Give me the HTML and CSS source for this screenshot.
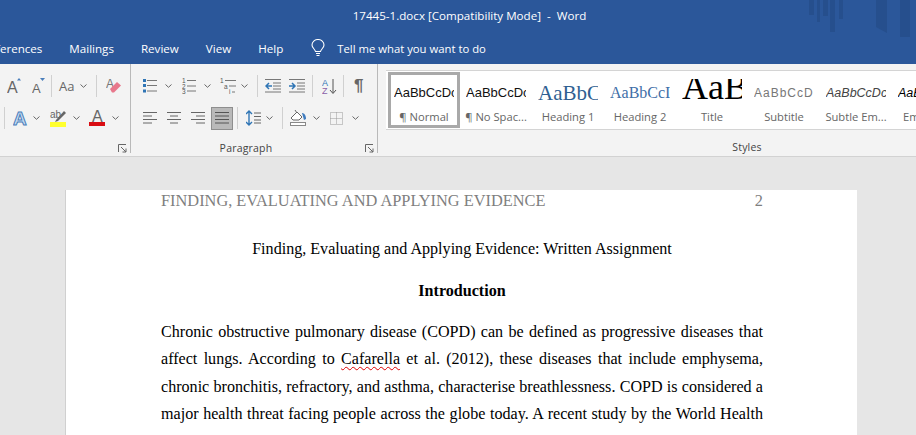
FILE: index.html
```html
<!DOCTYPE html>
<html lang="en">
<head>
<meta charset="utf-8">
<title>17445-1.docx [Compatibility Mode] - Word</title>
<link rel="stylesheet" href="styles.css">
</head>
<body>
<svg class="defs" width="0" height="0" aria-hidden="true">
  <symbol id="chev" viewBox="0 0 7 4"><path d="M.5.5 3.5 3.3 6.5.5" fill="none" stroke="#666" stroke-width="1"/></symbol>
</svg>
<div class="app">
  <header class="top">
    <svg class="watermark" width="110" height="40" viewBox="0 0 110 40" aria-hidden="true">
      <g fill="#234a85" opacity=".6">
        <rect x="6" width="5" height="15"/><rect x="14" width="3" height="22"/><rect x="20" width="5" height="16"/><rect x="27" width="5" height="32"/><rect x="36" width="4" height="19"/>
        <path d="M73 0h11v33l-11-6zM97 0h10v37h-10z"/>
      </g>
    </svg>
    <div class="title">17445-1.docx [Compatibility Mode]&nbsp; -&nbsp; Word</div>
    <nav class="tabs">
      <span class="tab tab-ref">ferences</span>
      <span class="tab tab-next">Mailings</span>
      <span class="tab tab-next">Review</span>
      <span class="tab tab-next">View</span>
      <span class="tab tab-next">Help</span>
      <svg class="bulb" width="14" height="18" viewBox="0 0 14 18"><path d="M4.5 12.5C4 10 1 9 1 6a6 5.5 0 0 1 12 0c0 3-3 4-3.500 6.500zM5 14.500h4M5.500 16.500h3" fill="none" stroke="#fff" stroke-width="1.100"/></svg>
      <span class="tell">Tell me what you want to do</span>
    </nav>
  </header>

  <section class="ribbon">
    <div class="group group-font">
      <div class="row">
        <svg class="i ml-7" width="14" height="18" viewBox="0 0 14 18"><text x="0" y="16" class="glyph big">A</text><path d="M10 3.500h4L12 1z" fill="#4a7ebb"/></svg>
        <svg class="i ml-11" width="13" height="18" viewBox="0 0 13 18"><text x="0" y="16" class="glyph mid">A</text><path d="M8 1h5l-2.500 3z" fill="#4a7ebb"/></svg>
        <i class="sep ml-6"></i>
        <span class="aa ml-7">Aa</span>
        <svg class="chev ml-6"><use href="#chev"/></svg>
        <i class="sep ml-9"></i>
        <svg class="i ml-9" width="15" height="18" viewBox="0 0 15 18"><text x="0" y="11" class="glyph eraser-a">A</text><path d="M4 12 11 5l4 3.500-7 7H6z" fill="#e8788c"/></svg>
      </div>
      <div class="row row2">
        <i class="sep ml-4"></i>
        <svg class="i ml-8" width="15" height="18" viewBox="0 0 15 18"><text x="0" y="16" class="glyph fx">A</text></svg>
        <svg class="chev ml-5"><use href="#chev"/></svg>
        <svg class="i ml-10" width="17" height="20" viewBox="0 0 17 20"><text x="0" y="10" class="glyph ab">ab</text><path d="M6 12 14 3l2 2-8 8-3 1z" fill="#666"/><rect y="14" width="16" height="5" fill="#ffff2e"/></svg>
        <svg class="chev ml-6"><use href="#chev"/></svg>
        <svg class="i ml-9" width="17" height="20" viewBox="0 0 17 20"><text x="3" y="14" class="glyph big">A</text><rect y="14" width="16" height="4" fill="#d90d12"/></svg>
        <svg class="chev ml-6"><use href="#chev"/></svg>
      </div>
      <div class="label-row"><span></span><svg class="launch" width="9" height="9" viewBox="0 0 9 9"><path d="M.5 8V.5H8M3 3l5 5M8 4.500V8H4.500" fill="none" stroke="#666"/></svg></div>
    </div>

    <div class="group group-para">
      <div class="row">
        <svg class="i ml-12" width="14" height="14" viewBox="0 0 14 14"><path d="M4 1.500h10M4 6.500h10M4 12h10" stroke="#777"/><path d="M0 0h3v3H0zM0 5h3v3H0zM0 10.500h3v3H0z" fill="#2f75b5"/></svg>
        <svg class="chev ml-8"><use href="#chev"/></svg>
        <svg class="i ml-10" width="14" height="16" viewBox="0 0 14 16"><text x="0" y="5" class="glyph tiny">1</text><text x="0" y="10.500" class="glyph tiny">2</text><text x="0" y="15.500" class="glyph tiny">3</text><path d="M5 2.500h9M5 8h9M5 13h9" stroke="#777"/></svg>
        <svg class="chev ml-8"><use href="#chev"/></svg>
        <svg class="i ml-9" width="17" height="17" viewBox="0 0 17 17"><text x="0" y="5" class="glyph tiny">1</text><text x="4" y="11" class="glyph tiny">a</text><text x="9" y="16" class="glyph tiny">i</text><path d="M5 2.500h11M9 8h7M12 14h3" stroke="#777"/></svg>
        <svg class="chev ml-4"><use href="#chev"/></svg>
        <i class="sep ml-9"></i>
        <svg class="i ml-7" width="16" height="14" viewBox="0 0 16 14"><path d="M0 .5h16M8 4h8M8 7h8M8 10h8M0 13h16" stroke="#777"/><path d="M7 7H1M4 4 1 7l3 3" fill="none" stroke="#2f75b5" stroke-width="1.500"/></svg>
        <svg class="i ml-8" width="16" height="14" viewBox="0 0 16 14"><path d="M0 .5h16M8 4h8M8 7h8M8 10h8M0 13h16" stroke="#777"/><path d="M0 7h6M3 4l3 3-3 3" fill="none" stroke="#2f75b5" stroke-width="1.500"/></svg>
        <i class="sep ml-7"></i>
        <svg class="i ml-9" width="15" height="17" viewBox="0 0 15 17"><text x="0" y="8" class="glyph az-a">A</text><text x="0" y="16" class="glyph az-z">Z</text><path d="M11 1v14M8 12l3 3.500 3-3.500" fill="none" stroke="#555"/></svg>
        <i class="sep ml-6"></i>
        <span class="pil ml-10">¶</span>
      </div>
      <div class="row row2">
        <svg class="i ml-12" width="14" height="12" viewBox="0 0 14 12"><path d="M0 .5h14M0 4h9M0 7.500h14M0 11h9" stroke="#666"/></svg>
        <svg class="i ml-10" width="14" height="12" viewBox="0 0 14 12"><path d="M0 .5h14M3 4h8M0 7.500h14M3 11h8" stroke="#666"/></svg>
        <svg class="i ml-10" width="14" height="12" viewBox="0 0 14 12"><path d="M0 .5h14M5 4h9M0 7.500h14M5 11h9" stroke="#666"/></svg>
        <span class="just ml-6"><svg width="14" height="12" viewBox="0 0 14 12"><path d="M0 .5h14M0 4h14M0 7.500h14M0 11h14" stroke="#555"/></svg></span>
        <i class="sep ml-4"></i>
        <svg class="i ml-8" width="15" height="16" viewBox="0 0 15 16"><path d="M3 1v14M0 4l3-3 3 3M0 12l3 3 3-3" fill="none" stroke="#2f75b5" stroke-width="1.400"/><path d="M8 3h7M8 6.500h7M8 10h7M8 13h7" stroke="#666"/></svg>
        <svg class="chev ml-5"><use href="#chev"/></svg>
        <i class="sep ml-9"></i>
        <svg class="i ml-7" width="17" height="16" viewBox="0 0 17 16"><path d="M1 8l6-6 5 5-3 3H3zM5 0l2 3" fill="#fff" stroke="#666"/><path d="M12 3c2 0 4 2 4 6l-2 1z" fill="#3f7cbf"/><rect x=".5" y="12.500" width="15" height="3" fill="#fff" stroke="#888"/></svg>
        <svg class="chev ml-6"><use href="#chev"/></svg>
        <svg class="i ml-10" width="13" height="13" viewBox="0 0 13 13"><path d="M.5.500h12v12H.5zM6.500.5v12M.5 6.500h12" fill="none" stroke="#999" stroke-dasharray="1 1"/></svg>
        <svg class="chev ml-9"><use href="#chev"/></svg>
      </div>
      <div class="label-row para-label"><span class="lbl">Paragraph</span><svg class="launch" width="9" height="9" viewBox="0 0 9 9"><path d="M.5 8V.5H8M3 3l5 5M8 4.500V8H4.500" fill="none" stroke="#666"/></svg></div>
    </div>

    <div class="group group-styles">
      <div class="gallery">
        <div class="style sel"><span class="sample s-normal">AaBbCcDc</span><span class="name">¶ Normal</span></div>
        <div class="style"><span class="sample s-normal">AaBbCcDc</span><span class="name">¶ No Spac...</span></div>
        <div class="style"><span class="sample s-h1">AaBbC</span><span class="name">Heading 1</span></div>
        <div class="style"><span class="sample s-h2">AaBbCcI</span><span class="name">Heading 2</span></div>
        <div class="style"><span class="sample s-title">AaB</span><span class="name">Title</span></div>
        <div class="style"><span class="sample s-sub">AaBbCcD</span><span class="name">Subtitle</span></div>
        <div class="style"><span class="sample s-em">AaBbCcDc</span><span class="name">Subtle Em...</span></div>
        <div class="style"><span class="sample s-em2">AaBbCcDc</span><span class="name">Emphasis</span></div>
      </div>
      <div class="styles-label"><span class="lbl">Styles</span></div>
    </div>
  </section>

  <main class="canvas">
    <article class="page">
      <div class="running"><span>FINDING, EVALUATING AND APPLYING EVIDENCE</span><span>2</span></div>
      <h1 class="doc-title">Finding, Evaluating and Applying Evidence: Written Assignment</h1>
      <h2 class="doc-head">Introduction</h2>
      <p class="line">Chronic obstructive pulmonary disease (COPD) can be defined as progressive diseases that</p>
      <p class="line">affect lungs. According to <span class="spell">Cafarella</span> et al. (2012), these diseases that include emphysema,</p>
      <p class="line">chronic bronchitis, refractory, and asthma, characterise breathlessness. COPD is considered a</p>
      <p class="line">major health threat facing people across the globe today. A recent study by the World Health</p>
    </article>
  </main>
</div>
</body>
</html>
```
FILE: styles.css
```css
* { box-sizing: border-box; }
html, body { margin: 0; height: 100%; overflow: hidden; }
body { width: 916px; height: 435px; font-family: "Open Sans", "Noto Sans", sans-serif; background: #e6e6e6; }
.defs { position: absolute; }
.app { display: flex; flex-direction: column; height: 435px; overflow: hidden; }

.top { position: relative; background: #2b579a; height: 64px; color: #fff; flex: none; }
.watermark { position: absolute; right: 0; top: 0; margin-right: 3px; }
.title { text-align: center; font-size: 11.600px; line-height: 16px; padding-top: 8px; height: 32px; padding-left: 23px; }
.tabs { display: flex; align-items: center; height: 32px; font-size: 11.600px; white-space: nowrap; }
.tab-ref { margin-left: -4px; }
.tab-next { margin-left: 27px; }
.bulb { margin-left: 28px; flex: none; }
.tell { margin-left: 12px; font-size: 11.300px; }

.ribbon { display: flex; height: 93px; background: #f3f3f3; border-bottom: 1px solid #d2d2d2; flex: none; }
.group { display: flex; flex-direction: column; flex: none; height: 92px; }
.group-font { width: 131px; border-right: 1px solid #b9b9b9; height: 89px; }
.group-para { width: 247px; border-right: 1px solid #b9b9b9; height: 89px; }
.group-styles { flex: 1; min-width: 0; padding-left: 8px; padding-top: 6px; }

.row { display: flex; align-items: center; height: 22px; margin-top: 11px; flex: none; }
.row2 { margin-top: 9px; height: 24px; }
.i, .chev, .sep { flex: none; }
.chev { width: 7px; height: 4px; }
.sep { display: block; width: 1px; height: 22px; background: #d0d0d0; }
.aa { font-size: 13px; line-height: 18px; color: #666; width: 15px; }
.pil { font-size: 17px; line-height: 20px; color: #666; font-family: "Liberation Sans", sans-serif; font-weight: 700; }
.just { display: flex; align-items: center; justify-content: center; width: 22px; height: 23px; background: #b9b9b9; border: 1px solid #8e8e8e; flex: none; }
.glyph { font-family: "Liberation Sans", sans-serif; fill: #666; }
.big { font-size: 16px; }
.mid { font-size: 13px; }
.eraser-a { font-size: 12px; fill: #777; }
.fx { font-size: 19px; font-weight: 700; fill: #c9ddf2; stroke: #4a7ebb; stroke-width: 1; }
.ab { font-size: 10px; }
.tiny { font-size: 6.500px; fill: #555; }
.az-a { font-size: 9px; fill: #2f75b5; }
.az-z { font-size: 9px; fill: #8a5fa8; }

.ml-4 { margin-left: 4px; } .ml-5 { margin-left: 5px; } .ml-6 { margin-left: 6px; } .ml-7 { margin-left: 7px; }
.ml-8 { margin-left: 8px; } .ml-9 { margin-left: 9px; } .ml-10 { margin-left: 10px; } .ml-11 { margin-left: 11px; } .ml-12 { margin-left: 12px; }

.label-row { display: flex; align-items: center; justify-content: center; position: relative; flex: 1; padding-top: 11px; }
.para-label { padding-right: 16px; }
.lbl { font-size: 10.500px; line-height: 15px; color: #444; letter-spacing: .2px; }
.launch { position: absolute; right: 3px; top: 14px; }

.gallery { display: flex; height: 60px; background: #fff; border-top: 1px solid #d4d4d4; border-bottom: 1px solid #d4d4d4; overflow: hidden; padding-left: 2px; }
.style { width: 72px; flex: none; display: flex; flex-direction: column; align-items: center; height: 58px; overflow: hidden; }
.style.sel { outline: 3px solid #a9a9a9; outline-offset: -3px; margin-top: 1px; height: 56px; }
.sel .sample { height: 35px; line-height: 42px; }
.sample { display: block; width: 60px; height: 36px; overflow: hidden; white-space: nowrap; line-height: 44px; text-align: left; color: #111; font-size: 12px; flex: none; }
.name { font-size: 11.200px; line-height: 16px; color: #666; white-space: nowrap; margin-top: 2px; }
.s-normal { font-family: "Liberation Sans", sans-serif; font-size: 13px; }
.s-h1 { font-family: "Liberation Serif", serif; font-size: 21px; color: #2f5f92; }
.s-h2 { font-family: "Liberation Serif", serif; font-size: 16px; color: #3f6fa8; }
.s-title { font-family: "Liberation Serif", serif; font-size: 36px; color: #000; margin-top: 8px; height: 28px; line-height: 16px; }
.s-sub { font-family: "Liberation Sans", sans-serif; font-size: 12px; letter-spacing: 1px; color: #777; }
.s-em { font-family: "Liberation Sans", sans-serif; font-size: 12.500px; font-style: italic; color: #444; }
.s-em2 { font-family: "Liberation Sans", sans-serif; font-size: 12.500px; font-style: italic; color: #000; }
.styles-label { height: 26px; display: flex; align-items: center; justify-content: center; padding: 8px 0 0 192px; }

.canvas { flex: 1; min-height: 0; padding: 33px 0 0 65px; overflow: hidden; }
.page { width: 792px; height: 400px; background: #fff; border-left: 1px solid #d0d0d0; padding: 0 94px 0 95px; font-family: "Liberation Serif", serif; font-size: 16.100px; color: #000; }
.running { display: flex; justify-content: space-between; color: #7f7f7f; line-height: 20px; padding-top: 1px; font-size: 16.350px; }
.doc-title { font: inherit; margin: 28px 0 0; line-height: 20px; text-align: center; }
.doc-head { font: inherit; font-weight: 700; margin: 22px 0 0; line-height: 20px; text-align: center; }
.line { margin: 0; line-height: 27.400px; text-align: justify; text-align-last: justify; white-space: nowrap; }
.doc-head + .line { margin-top: 17px; }
.spell { text-decoration: underline wavy #d00; text-decoration-thickness: 1px; text-underline-offset: 2px; }
```
